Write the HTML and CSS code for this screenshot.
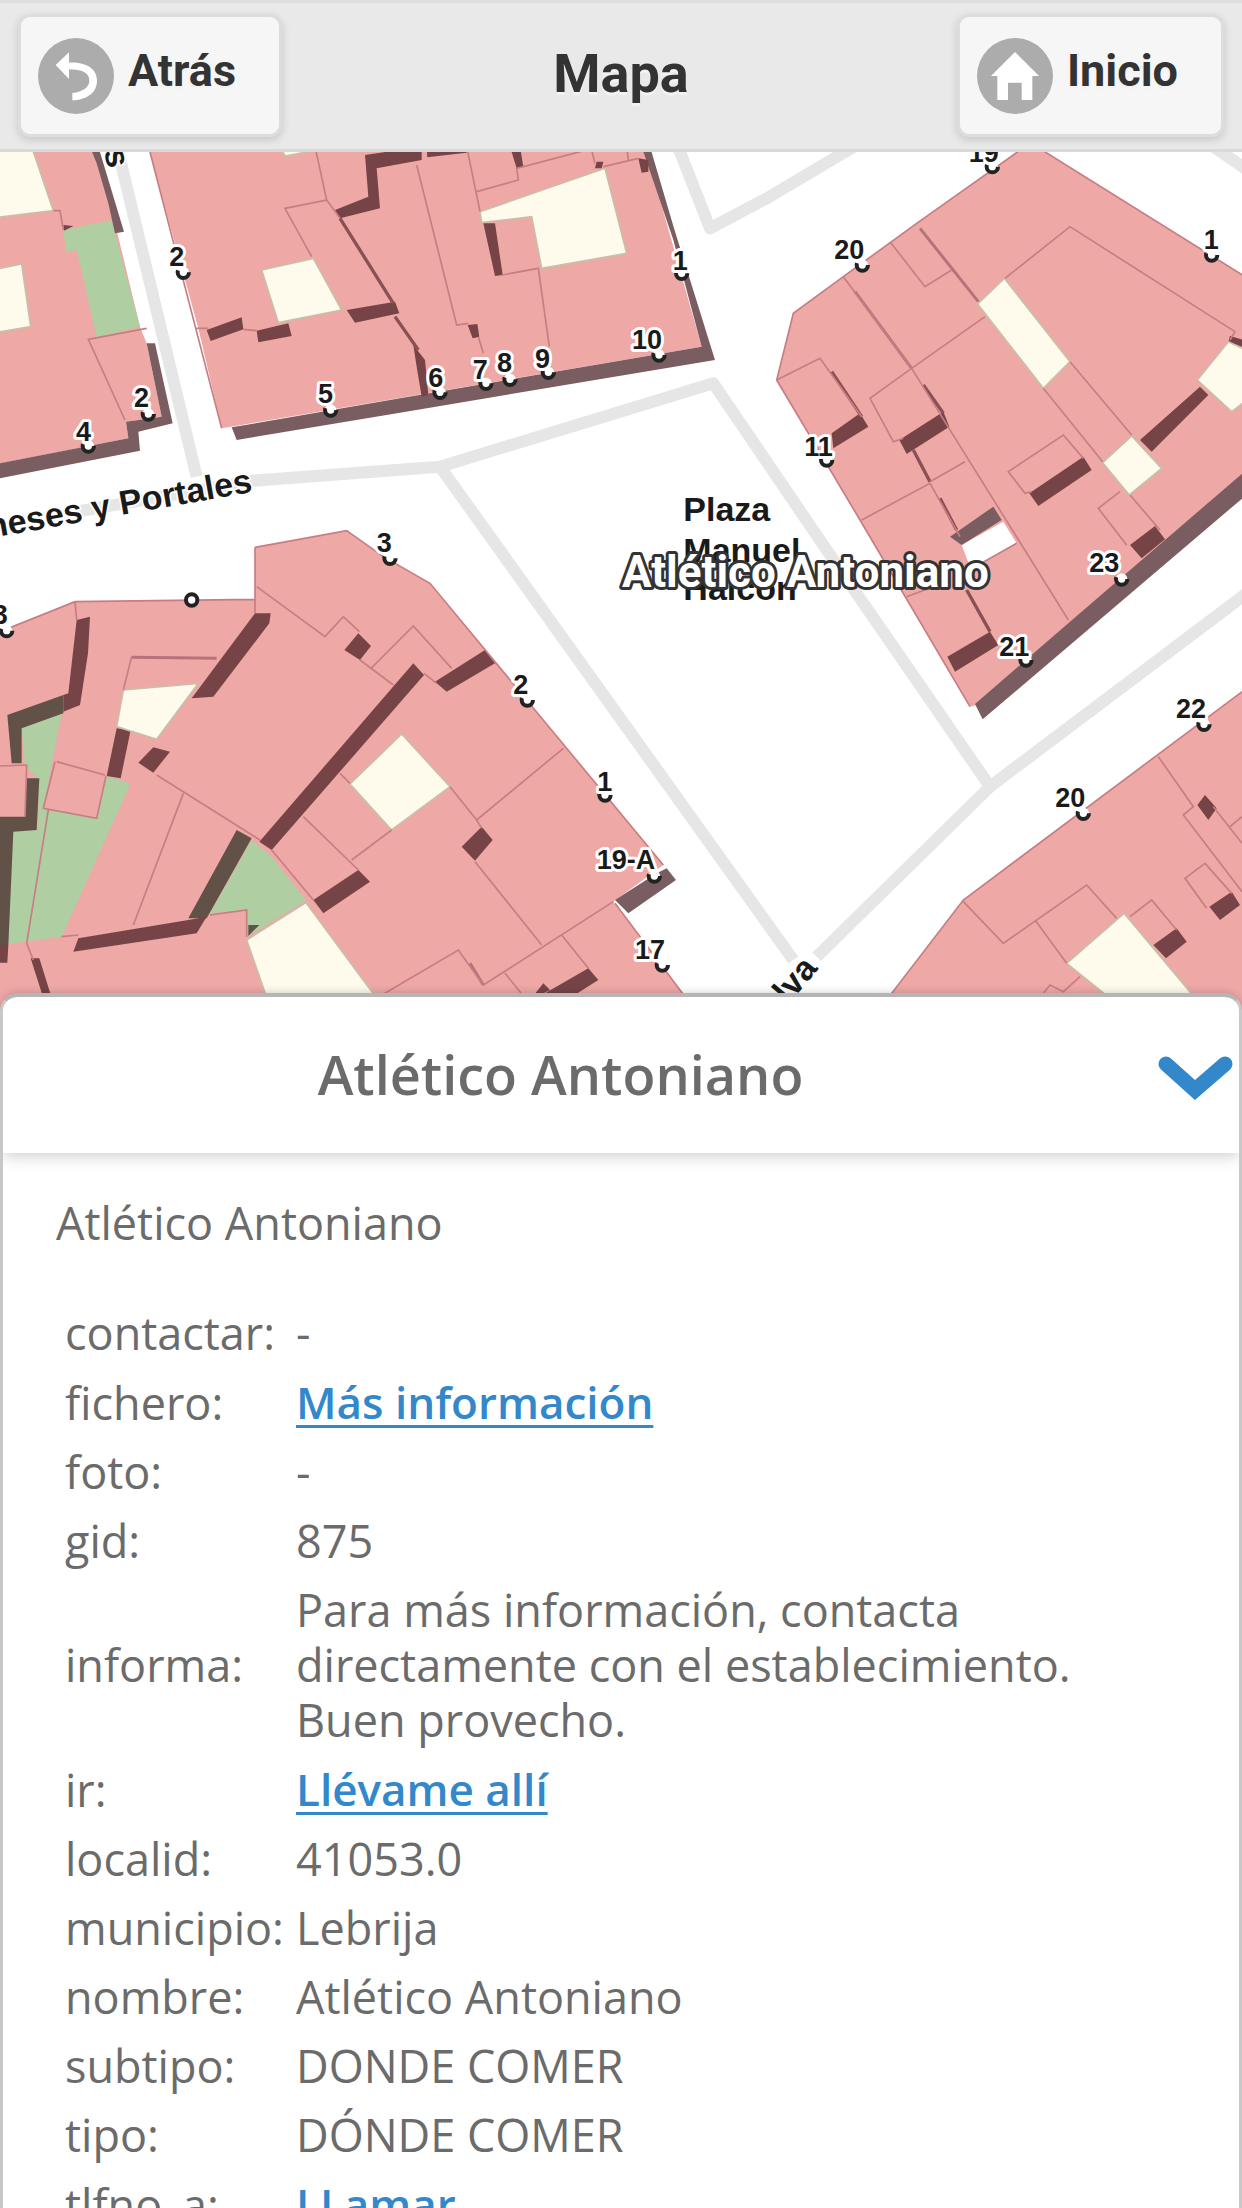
FILE: index.html
```html
<!DOCTYPE html>
<html lang="es">
<head>
<meta charset="utf-8">
<meta name="viewport" content="width=device-width, initial-scale=1">
<title>Mapa</title>
<link rel="stylesheet" href="styles.css">
</head>
<body>
<div class="page">
  <header class="bar">
    <button class="bar-button" type="button">
      <svg class="icon" viewBox="0 0 228 228" aria-hidden="true">
        <circle cx="114" cy="114" r="114" fill="#acacac"/>
        <path d="M53 81 93 43V74C145 72 177 92 177 128 177 165 145 185 103 187V165C134 161 154 148 154 128 154 104 132 94 93 94V123Z" fill="#fff"/>
      </svg>
      <span class="bar-label">Atrás</span>
    </button>
    <h1 class="bar-title">Mapa</h1>
    <button class="bar-button" type="button">
      <svg class="icon" viewBox="0 0 228 228" aria-hidden="true">
        <circle cx="114" cy="114" r="114" fill="#acacac"/>
        <path d="M114 42 186 114H166V186H134V134H93V186H61V114H42Z" fill="#fff"/>
      </svg>
      <span class="bar-label">Inicio</span>
    </button>
  </header>

  <main class="map">
    <svg class="map-canvas" viewBox="0 456 3726 2592" role="img" aria-label="Mapa de Lebrija">
      <!-- streets -->
      <g class="road" transform="translate(0 420)">
        <path d="M350 10 368 90 590 1010"/>
        <path d="M200 1120 760 1022 1320 980 2140 730 2480 1230 2970 1940"/>
        <path d="M1320 980 2380 2460"/>
        <path d="M3760 1345 2970 1940 2450 2450"/>
        <path d="M2030 10 2130 265 2300 175 2570 15"/>
        <path d="M3640 20 3750 95"/>
      </g>

      <!-- north-west block -->
      <g transform="translate(0 420)">
        <path class="house" d="M-9 20H285L345 250 420 560 440 610 485 830 378 845 385 895-9 972Z"/>
        <path class="yard" d="M-9 20H95L160 212-9 232ZM-9 387 65 372 92 560-9 577Z"/>
        <path class="garden" d="M190 270 335 240 345 280 420 560 290 592 230 330 198 335Z"/>
        <path class="cast" d="M270 20H295L372 275 345 280 325 190 290 70ZM440 610H465L518 850 415 875 420 932 0 1015V970L385 895 378 845 485 830Z"/>
        <path class="shade" d="M190 255 220 258 192 272Z"/>
        <path class="wall" d="M160 212H180L190 270M440 565 265 598 375 840"/>
      </g>

      <!-- north block -->
      <g transform="translate(0 420)">
        <path class="house" d="M445 20H1935L2105 620 665 865 595 565Z"/>
        <path class="cast" d="M1925 20H1950L2022 265 2145 660 1200 818 710 900 695 862 1200 775 2105 620 2020 300Z"/>
        <path class="yard" d="M785 390 940 355 1025 510 835 548ZM840 20H930L920 36 855 48ZM1440 215 1815 85 1880 340 1625 385 1595 230 1445 248Z"/>
        <path class="shade" d="M1095 45 1265 20V60L1130 85 1140 205 1020 235 1005 210 1105 170ZM1280 20H1400V38L1282 52ZM1040 510 1185 485 1198 520 1065 548ZM620 570 725 532 730 568 632 603ZM770 572 865 550 875 588 775 607ZM1530 20H1560L1570 80 1550 85ZM1450 250H1485L1508 405 1485 408ZM1915 55 1945 60V95L1925 98ZM1403 555 1432 552 1438 590 1418 595ZM1790 65H1810L1805 85H1785ZM1240 615 1275 660 1285 765 1265 770 1250 680Z"/>
        <path class="wall-thick" d="M1020 235 1180 490M1185 530 1255 630"/>
        <path class="wall" d="M945 20 980 180 855 205 935 350M980 180 1020 235M590 565H625M730 568 770 572M1250 75 1370 555 1405 550M1435 590 1450 640M1400 20 1440 215M1430 155 1555 120 1550 85 1760 30M1775 30 1785 70M1810 80 1915 55M1880 20 1885 60M1505 405 1615 385 1648 620M450 36 665 865"/>
      </g>

      <!-- north-east block -->
      <g transform="translate(2280 420)">
        <path class="house" d="M795 20H830L1500 438V1000L650 1695 630 1700 300 1140 50 720 100 520 250 410 470 250Z"/>
        <path class="cast" d="M1500 955V1030L668 1738 645 1692 930 1445Z"/>
        <path class="plaza" d="M605 1215 730 1145 770 1210 655 1275 625 1268Z"/>
        <path class="cast" d="M570 1190 700 1100 725 1140 605 1215Z"/>
        <path class="shade" d="M1320 740 1345 765 1175 935 1140 900ZM300 820 325 860 220 925 215 880ZM550 815 568 860 440 942 418 900ZM970 950 995 990 835 1098 808 1060ZM1185 1158 1215 1198 1145 1255 1110 1215ZM1410 588 1500 615V640L1405 605ZM690 1475 715 1515 585 1595 562 1550Z"/>
        <path class="yard" d="M733 415 930 665 850 745 653 492ZM1115 888 1205 985 1108 1065 1028 968ZM1405 605 1500 650V750L1415 815 1312 720Z"/>
        <path class="wall-thick" d="M215 695 305 830M490 735 550 820M460 930 510 1025M540 1075 590 1170M620 1350 690 1475"/>
        <path class="wall-double" d="M285 455 455 685M480 265 655 485"/>
        <path class="wall" d="M50 720 180 655 305 830M250 410 455 685M390 305 495 440 575 390M735 415 930 260 1425 575 1410 600M675 530 455 685 330 775 400 905 430 895M455 685 925 1440M510 1025 615 965M305 1140 510 1030 600 1190M970 955 910 885 745 995 795 1060 815 1055M850 745 1028 965M930 665 1115 885M1080 1055 1015 1105 1100 1215M1110 1065 1200 1170M440 1370 520 1340M655 1275 770 1210M795 20 470 250 250 410 100 520 50 720 300 1140 630 1700M830 20 1500 438"/>
      </g>

      <!-- south-west block -->
      <g transform="translate(0 1560)">
        <path class="house" d="M-9 338 45 318 225 245 765 238V82L1040 32 1150 110 1290 190 1455 390 1990 1035 1840 1145 2100 1490H-9Z"/>
        <path class="cast" d="M2000 1045 2028 1080 1885 1180 1845 1140 1970 1060Z"/>
        <path class="garden" d="M65 625 185 580 130 865 290 895 318 768 392 790 185 1250 0 1275 20 935 115 930V775L75 740ZM755 960 815 1010 918 1140 775 1230 740 1250 738 1170 630 1180Z"/>
        <path class="garden-shade" d="M22 585 190 525V580L65 625V730H35ZM80 775H118L110 930 40 935 25 1275H0V890H75ZM710 930 755 955 620 1195H565ZM745 1215H778L745 1248Z"/>
        <path class="shade" d="M230 300 270 290 264 400 240 555 190 575V525L205 520ZM765 280H812L808 310 640 530 575 535ZM350 625 392 630 362 775 320 768ZM460 682 510 695 460 758 415 728ZM1240 430 1272 465 815 990 778 965ZM1075 340 1113 378 1080 420 1033 390ZM565 1200 620 1190 590 1240 220 1295 235 1255ZM0 1275H25L22 1328H0ZM92 1315H118L160 1450H135ZM1075 1050 1110 1085 970 1180 940 1140ZM1455 390 1485 430 1340 515 1305 485ZM1445 920 1478 960 1425 1022 1385 980ZM1765 1345 1795 1380 1700 1440H1600ZM1630 1390 1650 1410 1590 1440Z"/>
        <path class="yard" d="M370 510 595 490 470 658 350 620ZM1205 642 1350 800 1175 930 1050 792ZM740 1260 918 1148 1160 1475H815Z"/>
        <path class="wall-double" d="M395 412 650 415M1410 1330 1450 1395"/>
        <path class="wall" d="M225 245 230 300M770 200 975 350 1030 290 1078 335M1113 445 1240 318 1355 445M1080 420 1180 495M1272 460 1310 490M395 410 370 510M170 725 315 765M165 725 130 865 290 895 318 768M145 870 80 1270 100 1320M0 738 80 735 75 890M470 765 780 960M550 820 400 1215M765 82V280M1020 760 1050 790M910 890 1075 1050M1055 1020 1175 930M815 990 940 1140M1350 800 1430 900 1690 685M1430 900 1445 925M1425 1025 1625 1275M1120 1440 1375 1290 1450 1395 1840 1145M1685 1245 1765 1345M1515 1360 1580 1440M185 1250 235 1245M630 1185 740 1170V1250M0 335 225 245 765 238M765 82 1040 32 1150 110 1290 190 1990 1035M1845 1150 2100 1490"/>
      </g>

      <!-- south-east block -->
      <g transform="translate(2280 1560)">
        <path class="house" d="M1500 475 1190 705 610 1140 345 1485H1500Z"/>
        <path class="yard" d="M1092 1180 1340 1475H1100L920 1330Z"/>
        <path class="shade" d="M1335 825 1370 865 1345 900 1312 855ZM1415 1115 1440 1155 1380 1200 1348 1160ZM1250 1225 1280 1265 1218 1315 1180 1275Z"/>
        <path class="wall" d="M1195 710 1300 860 1270 885 1446 1115M1360 860 1446 970M1410 920 1446 890M610 1145 730 1270 980 1095 1070 1195M825 1200 920 1330M1110 1190 1175 1140 1250 1230M1340 1165 1275 1075 1335 1030 1415 1120M850 1420 870 1395 910 1415 960 1370M1500 475 610 1140 345 1485"/>
      </g>

      <!-- house numbers and their markers -->
      <g transform="translate(0 420)">
        <circle class="marker-ring" cx="575" cy="1380" r="17"/>
        <g class="marker">
          <circle cx="550" cy="397" r="17"/><circle cx="445" cy="822" r="17"/><circle cx="265" cy="918" r="17"/>
          <circle cx="992" cy="810" r="17"/><circle cx="1170" cy="1255" r="17"/><circle cx="1320" cy="757" r="17"/>
          <circle cx="1458" cy="730" r="17"/><circle cx="1530" cy="718" r="17"/><circle cx="1645" cy="697" r="17"/>
          <circle cx="1977" cy="645" r="17"/><circle cx="2045" cy="400" r="17"/><circle cx="2977" cy="80" r="17"/>
          <circle cx="2587" cy="375" r="17"/><circle cx="3635" cy="345" r="17"/><circle cx="2480" cy="960" r="17"/>
          <circle cx="3365" cy="1317" r="17"/><circle cx="3078" cy="1560" r="17"/><circle cx="3612" cy="1753" r="17"/>
          <circle cx="3250" cy="2020" r="17"/><circle cx="20" cy="1472" r="17"/><circle cx="1582" cy="1680" r="17"/>
          <circle cx="1815" cy="1965" r="17"/><circle cx="1963" cy="2208" r="17"/><circle cx="1987" cy="2475" r="17"/>
        </g>
        <g class="number">
          <text x="508" y="377">2</text><text x="402" y="802">2</text><text x="228" y="902">4</text>
          <text x="954" y="790">5</text><text x="1130" y="1237">3</text><text x="1285" y="740">6</text>
          <text x="1418" y="716">7</text><text x="1491" y="697">8</text><text x="1605" y="684">9</text>
          <text x="1896" y="627">10</text><text x="2018" y="390">1</text><text x="2906" y="67">19</text>
          <text x="2503" y="357">20</text><text x="3611" y="327">1</text><text x="2413" y="947">11</text>
          <text x="3268" y="1297">23</text><text x="2998" y="1547">21</text><text x="3528" y="1735">22</text>
          <text x="3166" y="2002">20</text><text x="-22" y="1452">3</text><text x="1540" y="1662">2</text>
          <text x="1792" y="1952">1</text><text x="1790" y="2187">19-A</text><text x="1905" y="2457">17</text>
        </g>
        <g class="street">
          <text transform="translate(760 1055) rotate(-10)" text-anchor="end">neses y Portales</text>
          <text transform="translate(324 88) rotate(78)" text-anchor="end">es</text>
          <text transform="translate(2456 2486) rotate(-50)" text-anchor="end">lva</text>
          <text x="2050" y="1143">Plaza</text>
          <text x="2050" y="1265">Manuel</text>
          <text x="2050" y="1381">Halcón</text>
        </g>
        <text class="place" x="1866" y="1342">Atlético Antoniano</text>
      </g>
    </svg>
  </main>

  <section class="panel">
    <div class="panel-head">
      <h2 class="panel-title">Atlético Antoniano</h2>
      <button class="panel-toggle" type="button" aria-label="Ocultar">
        <svg class="chevron" viewBox="0 0 75 46" aria-hidden="true"><path d="M8 9 37 35 67 9" fill="none" stroke="#38c" stroke-width="15" stroke-linecap="round"/></svg>
      </button>
    </div>
    <div class="panel-body">
      <p class="intro">Atlético Antoniano</p>
      <table class="facts">
        <tr><th scope="row">contactar:</th><td>-</td></tr>
        <tr><th scope="row">fichero:</th><td><a href="#fichero">Más información</a></td></tr>
        <tr><th scope="row">foto:</th><td>-</td></tr>
        <tr><th scope="row">gid:</th><td>875</td></tr>
        <tr><th scope="row">informa:</th><td>Para más información, contacta directamente con el establecimiento. Buen provecho.</td></tr>
        <tr><th scope="row">ir:</th><td><a href="#ir">Llévame allí</a></td></tr>
        <tr><th scope="row">localid:</th><td>41053.0</td></tr>
        <tr><th scope="row">municipio:</th><td>Lebrija</td></tr>
        <tr><th scope="row">nombre:</th><td>Atlético Antoniano</td></tr>
        <tr><th scope="row">subtipo:</th><td>DONDE COMER</td></tr>
        <tr><th scope="row">tipo:</th><td>DÓNDE COMER</td></tr>
        <tr><th scope="row">tlfno_a:</th><td><a href="#llamar">LLamar</a></td></tr>
      </table>
    </div>
  </section>
</div>
</body>
</html>
```
FILE: styles.css
```css
* {
  box-sizing: border-box;
}

body {
  margin: 0;
  background: #fff;
  color: #6b6b6b;
  font-family: "Open Sans", "Noto Sans", sans-serif;
  font-size: 45px;
  line-height: 55px;
}

.page {
  display: flex;
  flex-direction: column;
  height: 100vh;
  overflow: hidden;
}

/* top bar */
.bar {
  display: grid;
  grid-template-columns: 1fr auto 1fr;
  align-items: center;
  flex: none;
  padding: 11px 18px 12px;
  border-top: 3px solid #ddd;
  border-bottom: 3px solid #d9d9d9;
  background: #e9e9e9;
  color: #333;
  font-family: Roboto, "Liberation Sans", sans-serif;
}

.bar-button {
  display: flex;
  align-items: center;
  gap: 14px;
  justify-self: start;
  height: 123px;
  padding: 0 43px 0 17px;
  border: 3px solid #ddd;
  border-radius: 12px;
  background: #f6f6f6;
  box-shadow: 0 3px 9px rgba(0, 0, 0, 0.15);
  color: inherit;
  font: 700 45px/60px Roboto, "Liberation Sans", sans-serif;
  text-shadow: 0 3px 0 #f3f3f3;
}

.bar-button:last-child {
  justify-self: end;
}

.bar-label {
  padding-bottom: 10px;
}

.icon {
  flex: none;
  width: 76px;
  height: 76px;
}

.bar-title {
  margin: 0;
  padding-bottom: 3px;
  font-size: 54px;
  line-height: 60px;
  text-shadow: 0 3px 0 #f3f3f3;
}

/* map */
.map {
  flex: none;
  overflow: hidden;
  background: #fff;
}

.map-canvas {
  display: block;
  width: 100%;
  height: auto;
}

.road {
  fill: none;
  stroke: #e6e6e6;
  stroke-width: 36px;
  stroke-linejoin: round;
}

.house {
  fill: #eea8a6;
}

.yard {
  fill: #fefaec;
  stroke: #c9bfa8;
  stroke-width: 5px;
}

.garden {
  fill: #afcfa2;
}

.garden-shade {
  fill: #625146;
}

.plaza {
  fill: #fff;
}

.shade {
  fill: #764446;
}

.cast {
  fill: #7a5d61;
}

.wall {
  fill: none;
  stroke: #c67e83;
  stroke-width: 5px;
}

.wall-double {
  fill: none;
  stroke: #b5727a;
  stroke-width: 9px;
}

.wall-thick {
  fill: none;
  stroke: #8a5054;
  stroke-width: 10px;
}

.marker,
.marker-ring {
  fill: #fff;
  stroke: #222;
  stroke-width: 12px;
}

/* only the lower half of the ring shows below a number */
.marker {
  stroke-dasharray: 58 49;
}

.number,
.street {
  fill: #1a1a1a;
  stroke: #fff;
  stroke-linejoin: round;
  paint-order: stroke;
  font-family: "Liberation Sans", Arial, sans-serif;
}

.number {
  stroke-width: 18px;
  font-size: 81px;
  font-weight: 700;
}

.street {
  stroke-width: 10px;
  font-size: 102px;
  font-weight: 700;
}

.place {
  fill: #fff;
  stroke: #333;
  stroke-width: 18px;
  stroke-linejoin: round;
  paint-order: stroke;
  font-family: Roboto, "Liberation Sans", sans-serif;
  font-size: 132px;
  font-weight: 700;
}

/* details panel */
.panel {
  position: relative;
  display: flex;
  flex-direction: column;
  flex: 1;
  min-height: 0;
  margin-top: -23px;
  border: 3px solid #c8c8c8;
  border-top: 4px solid #b5b5b5;
  border-bottom: 0;
  border-radius: 18px 18px 0 0;
  background: #fff;
  box-shadow: 0 0 9px rgba(0, 0, 0, 0.2);
  overflow: hidden;
}

.panel-head {
  display: flex;
  align-items: center;
  flex: none;
  height: 156px;
  padding-right: 6px;
  box-shadow: 0 3px 15px rgba(0, 0, 0, 0.2);
}

.panel-title {
  flex: 1;
  margin: 0;
  padding-bottom: 3px;
  font-size: 54px;
  font-weight: 600;
  line-height: 66px;
  text-align: center;
}

.panel-toggle {
  display: flex;
  padding: 6px 0 0 40px;
  border: 0;
  background: none;
}

.chevron {
  width: 75px;
  height: 46px;
}

.panel-body {
  flex: 1;
  min-height: 0;
  padding: 42px 53px 0;
  overflow: hidden;
}

.intro {
  margin: 0 0 48px;
}

.facts {
  width: 100%;
  border-spacing: 0;
}

.facts th,
.facts td {
  padding: 7px 9px;
  font-weight: 400;
  text-align: left;
}

.facts th {
  width: 231px;
  padding-right: 3px;
  white-space: nowrap;
}

.facts td {
  padding-right: 60px;
}

.facts a {
  color: #38c;
  font-size: 44px;
  font-weight: 600;
  text-decoration-thickness: 3px;
  text-underline-offset: 6px;
}
```
